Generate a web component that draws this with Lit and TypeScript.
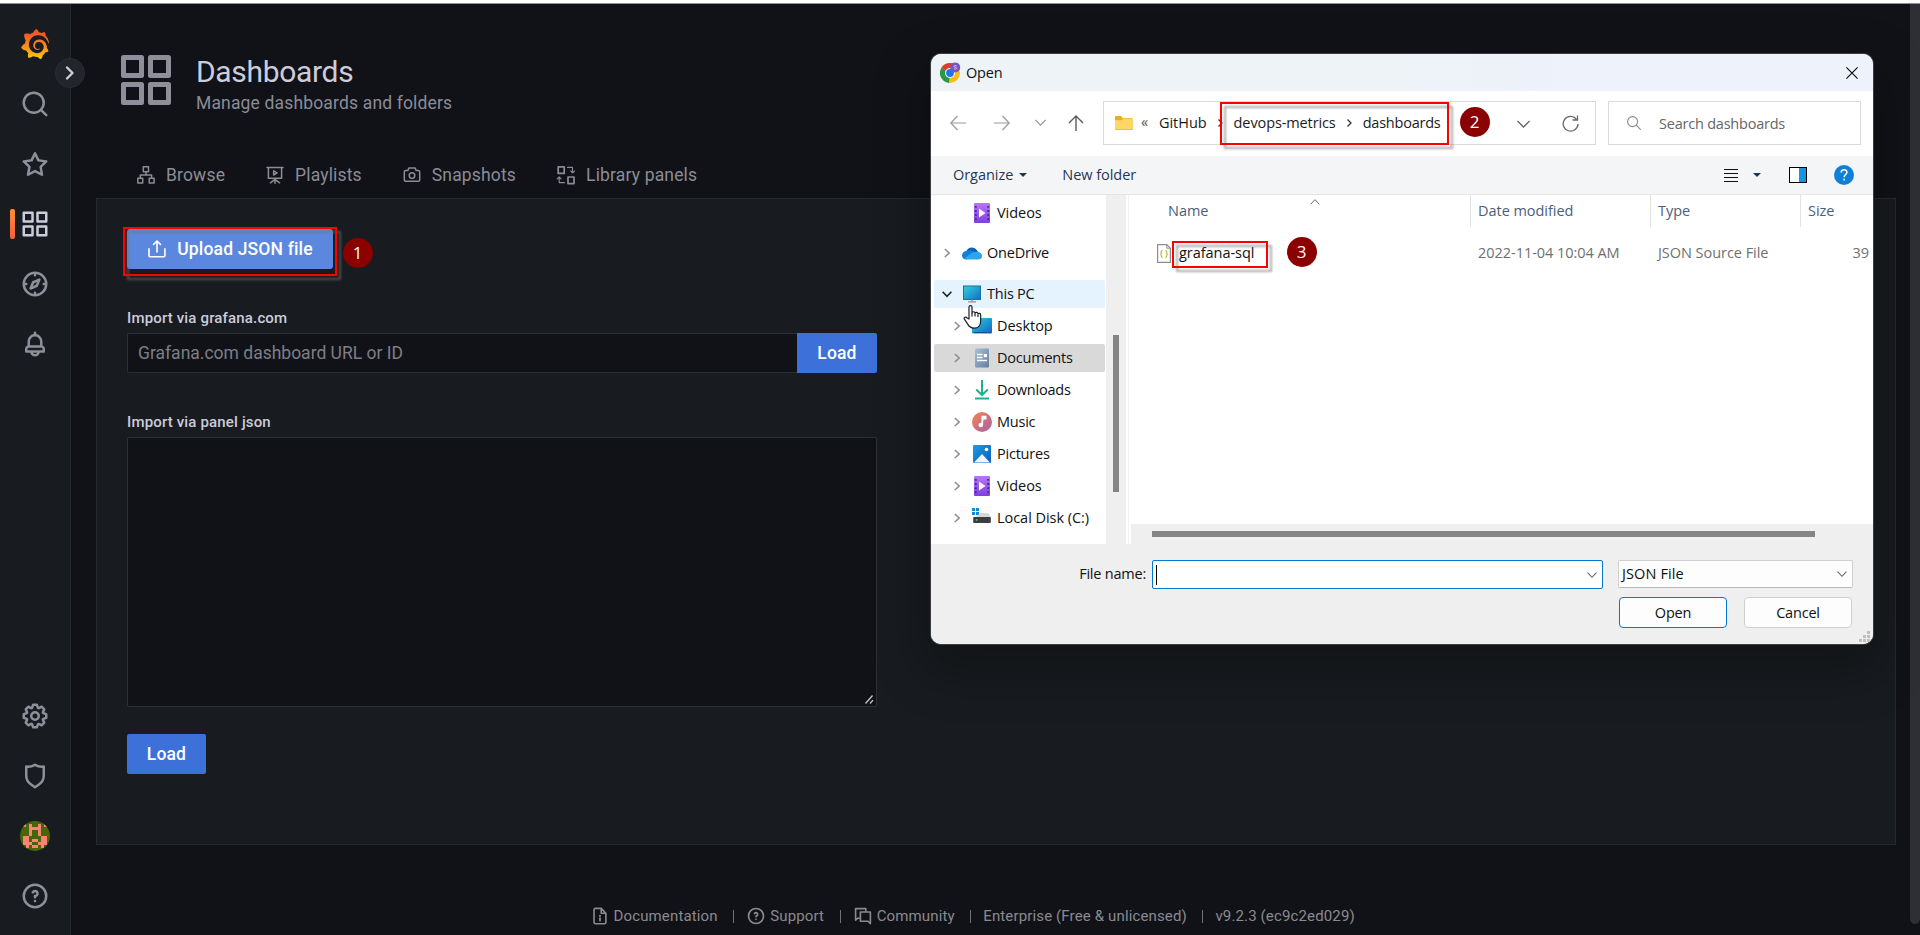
import { LitElement, html, svg, css } from "lit";
import { customElement } from "lit/decorators.js";

const PATHS = {
  search: "M21.71,20.29,18,16.61A9,9,0,1,0,16.61,18l3.68,3.68a1,1,0,0,0,1.42,0A1,1,0,0,0,21.71,20.29ZM11,18a7,7,0,1,1,7-7A7,7,0,0,1,11,18Z",
  star: "M22,9.67A1,1,0,0,0,21.14,9l-5.69-.83L12.9,3a1,1,0,0,0-1.8,0L8.55,8.16,2.86,9a1,1,0,0,0-.81.68,1,1,0,0,0,.25,1l4.13,4-1,5.68A1,1,0,0,0,6.9,21.44L12,18.77l5.1,2.67a.93.93,0,0,0,.46.12,1,1,0,0,0,.59-.19,1,1,0,0,0,.4-1l-1-5.68,4.13-4A1,1,0,0,0,22,9.67Zm-6.15,4a1,1,0,0,0-.29.88l.72,4.2-3.76-2a1.06,1.06,0,0,0-.94,0l-3.76,2,.72-4.2a1,1,0,0,0-.29-.88l-3-3,4.21-.61a1,1,0,0,0,.76-.55L12,5.7l1.88,3.82a1,1,0,0,0,.76.55l4.21.61Z",
  apps: "M10,13H3a1,1,0,0,0-1,1v7a1,1,0,0,0,1,1h7a1,1,0,0,0,1-1V14A1,1,0,0,0,10,13ZM9,20H4V15H9ZM21,2H14a1,1,0,0,0-1,1v7a1,1,0,0,0,1,1h7a1,1,0,0,0,1-1V3A1,1,0,0,0,21,2ZM20,9H15V4h5Zm1,4H14a1,1,0,0,0-1,1v7a1,1,0,0,0,1,1h7a1,1,0,0,0,1-1V14A1,1,0,0,0,21,13Zm-1,7H15V15h5ZM10,2H3A1,1,0,0,0,2,3v7a1,1,0,0,0,1,1h7a1,1,0,0,0,1-1V3A1,1,0,0,0,10,2ZM9,9H4V4H9Z",
  compass: "M12,2A10,10,0,1,0,22,12,10,10,0,0,0,12,2Zm1,17.93V19a1,1,0,0,0-2,0v.93A8,8,0,0,1,4.07,13H5a1,1,0,0,0,0-2H4.07A8,8,0,0,1,11,4.07V5a1,1,0,0,0,2,0V4.07A8,8,0,0,1,19.93,11H19a1,1,0,0,0,0,2h.93A8,8,0,0,1,13,19.93ZM15.14,7.55l-5,2.12a1,1,0,0,0-.52.52l-2.12,5a1,1,0,0,0,.21,1.1,1,1,0,0,0,.7.3.93.93,0,0,0,.4-.09l5-2.12a1,1,0,0,0,.52-.52l2.12-5a1,1,0,0,0-1.31-1.31Zm-2.49,5.1-2.28,1,1-2.28,2.28-1Z",
  bell: "M18,13.18V10a6,6,0,0,0-5-5.91V3a1,1,0,0,0-2,0V4.09A6,6,0,0,0,6,10v3.18A3,3,0,0,0,4,16v2a1,1,0,0,0,1,1H8.14a4,4,0,0,0,7.72,0H19a1,1,0,0,0,1-1V16A3,3,0,0,0,18,13.18ZM8,10a4,4,0,0,1,8,0v3H8Zm4,10a2,2,0,0,1-1.72-1h3.44A2,2,0,0,1,12,20Zm6-3H6V16a1,1,0,0,1,1-1H17a1,1,0,0,1,1,1Z",
  gear: "M21.32,9.55l-1.89-.63.89-1.78A1,1,0,0,0,20.13,6L18,3.87a1,1,0,0,0-1.15-.19l-1.78.89-.63-1.89A1,1,0,0,0,13.5,2h-3a1,1,0,0,0-.95.68L8.92,4.57,7.14,3.68A1,1,0,0,0,6,3.87L3.87,6a1,1,0,0,0-.19,1.15l.89,1.78-1.89.63A1,1,0,0,0,2,10.5v3a1,1,0,0,0,.68.95l1.89.63-.89,1.78A1,1,0,0,0,3.87,18L6,20.13a1,1,0,0,0,1.15.19l1.78-.89.63,1.89a1,1,0,0,0,.95.68h3a1,1,0,0,0,.95-.68l.63-1.89,1.78.89A1,1,0,0,0,18,20.13L20.13,18a1,1,0,0,0,.19-1.15l-.89-1.78,1.89-.63A1,1,0,0,0,22,13.5v-3A1,1,0,0,0,21.32,9.55ZM20,12.78l-1.2.4A2,2,0,0,0,17.64,16l.57,1.14-1.1,1.1L16,17.64a2,2,0,0,0-2.79,1.16l-.4,1.2H11.22l-.4-1.2A2,2,0,0,0,8,17.64l-1.14.57-1.1-1.1L6.36,16A2,2,0,0,0,5.2,13.18L4,12.78V11.22l1.2-.4A2,2,0,0,0,6.36,8L5.79,6.89l1.1-1.1L8,6.36A2,2,0,0,0,10.82,5.2l.4-1.2h1.56l.4,1.2A2,2,0,0,0,16,6.36l1.14-.57,1.1,1.1L17.64,8a2,2,0,0,0,1.16,2.79l1.2.4ZM12,8a4,4,0,1,0,4,4A4,4,0,0,0,12,8Zm0,6a2,2,0,1,1,2-2A2,2,0,0,1,12,14Z",
  shield: "M19.63,3.65a1,1,0,0,0-.84-.2,8,8,0,0,1-6.22-1.27,1,1,0,0,0-1.14,0A8,8,0,0,1,5.21,3.45a1,1,0,0,0-.84.2A1,1,0,0,0,4,4.43v7.45a9,9,0,0,0,3.77,7.33l3.65,2.6a1,1,0,0,0,1.16,0l3.65-2.6A9,9,0,0,0,20,11.88V4.43A1,1,0,0,0,19.63,3.65ZM18,11.88a7,7,0,0,1-2.93,5.7L12,19.77,8.93,17.58A7,7,0,0,1,6,11.88V5.58a10,10,0,0,0,6-1.39,10,10,0,0,0,6,1.39Z",
  help: "M11.29,15.29a1.58,1.58,0,0,0-.12.15.76.76,0,0,0-.09.18.64.64,0,0,0-.06.18,1.36,1.36,0,0,0,0,.2.84.84,0,0,0,.08.38.9.9,0,0,0,.54.54.94.94,0,0,0,.76,0,.9.9,0,0,0,.54-.54A1,1,0,0,0,13,16a1,1,0,0,0-.29-.71A1,1,0,0,0,11.29,15.29ZM12,2A10,10,0,1,0,22,12,10,10,0,0,0,12,2Zm0,18a8,8,0,1,1,8-8A8,8,0,0,1,12,20ZM12,7A3,3,0,0,0,9.4,8.5a1,1,0,1,0,1.73,1A1,1,0,0,1,12,9a1,1,0,0,1,0,2,1,1,0,0,0-1,1v1a1,1,0,0,0,2,0v-.18A3,3,0,0,0,12,7Z",
  grafana: "M23.02 10.59a8.578 8.578 0 0 0-.862-3.034 8.911 8.911 0 0 0-1.789-2.445c.337-1.342-.413-2.505-.413-2.505-1.292-.08-2.113.4-2.416.62-.052-.02-.102-.044-.154-.064-.22-.089-.446-.172-.677-.247-.231-.073-.47-.14-.711-.197a9.867 9.867 0 0 0-.875-.161C14.557.753 12.94 0 12.94 0c-1.804 1.145-2.147 2.744-2.147 2.744l-.018.093c-.098.029-.2.057-.298.088-.138.042-.275.094-.413.143-.138.055-.275.107-.41.166a8.869 8.869 0 0 0-1.557.87l-.063-.029c-2.497-.955-4.716.195-4.716.195-.203 2.658.996 4.33 1.235 4.636a11.608 11.608 0 0 0-.607 2.635C1.636 12.677.953 15.014.953 15.014c1.926 2.214 4.171 2.351 4.171 2.351.003-.002.006-.002.006-.005.285.509.615.994.986 1.446.156.19.32.371.488.548-.704 2.009.099 3.68.099 3.68 2.144.08 3.553-.937 3.849-1.173a9.784 9.784 0 0 0 3.164.501h.08l.055-.003.107-.002.103-.005.003.002c1.01 1.44 2.788 1.646 2.788 1.646 1.264-1.332 1.337-2.653 1.337-2.94v-.058c0-.02-.003-.039-.003-.06.265-.187.52-.387.758-.6a7.875 7.875 0 0 0 1.415-1.7c1.43.083 2.437-.885 2.437-.885-.236-1.49-1.085-2.216-1.264-2.354l-.018-.013-.016-.013a.217.217 0 0 1-.031-.02c.008-.092.016-.18.02-.27.011-.162.016-.323.016-.48v-.253l-.005-.098-.008-.135a1.891 1.891 0 0 0-.01-.13c-.003-.042-.008-.083-.013-.125l-.016-.124-.018-.122a6.215 6.215 0 0 0-2.032-3.73 6.015 6.015 0 0 0-3.222-1.46 6.292 6.292 0 0 0-.85-.048l-.107.002h-.063l-.044.003-.104.008a4.777 4.777 0 0 0-3.335 1.695c-.332.4-.592.84-.768 1.297a4.594 4.594 0 0 0-.312 1.817l.003.091c.005.055.007.11.013.164a3.615 3.615 0 0 0 .698 1.82 3.53 3.53 0 0 0 1.827 1.282c.33.098.66.14.971.137.039 0 .078 0 .114-.002l.063-.003c.02 0 .041-.003.062-.003.034-.002.065-.007.099-.01.007 0 .018-.003.028-.003l.031-.005.06-.008a1.18 1.18 0 0 0 .112-.02c.036-.008.072-.013.109-.024a2.634 2.634 0 0 0 .914-.415c.028-.02.056-.041.085-.065a.248.248 0 0 0 .039-.35.244.244 0 0 0-.309-.06l-.078.042c-.09.044-.184.083-.283.116a2.476 2.476 0 0 1-.475.096c-.028.003-.054.006-.083.006l-.083.002c-.026 0-.054 0-.08-.002l-.102-.006h-.012l-.024.006c-.016-.003-.031-.003-.044-.006-.031-.002-.06-.007-.091-.01a2.59 2.59 0 0 1-.724-.213 2.557 2.557 0 0 1-.667-.438 2.52 2.52 0 0 1-.805-1.475 2.306 2.306 0 0 1-.029-.444l.006-.122v-.023l.002-.031c.003-.021.003-.04.005-.06a3.163 3.163 0 0 1 1.352-2.29 3.12 3.12 0 0 1 .937-.43 2.946 2.946 0 0 1 .776-.101h.06l.07.002.045.003h.026l.07.005a4.041 4.041 0 0 1 1.635.49 3.94 3.94 0 0 1 1.602 1.662 3.77 3.77 0 0 1 .397 1.414l.005.076.003.075c.002.026.002.05.002.075 0 .024.003.052 0 .07v.065l-.002.073-.008.174a6.195 6.195 0 0 1-.08.639 5.1 5.1 0 0 1-.267.927 5.31 5.31 0 0 1-.624 1.13 5.052 5.052 0 0 1-3.237 2.014 4.82 4.82 0 0 1-.649.066l-.039.003h-.287a6.607 6.607 0 0 1-1.716-.265 6.776 6.776 0 0 1-3.4-2.274 6.75 6.75 0 0 1-.746-1.15 6.616 6.616 0 0 1-.714-2.596l-.005-.083-.002-.02v-.056l-.003-.073v-.096l-.003-.104v-.07l.003-.163c.008-.22.026-.45.054-.678a8.707 8.707 0 0 1 .28-1.355c.128-.444.286-.872.473-1.277a7.04 7.04 0 0 1 1.456-2.1 5.925 5.925 0 0 1 .953-.763c.169-.111.343-.213.524-.306.089-.05.182-.091.273-.135.047-.02.093-.042.138-.062a7.177 7.177 0 0 1 .714-.267l.145-.045c.049-.015.098-.026.148-.041.098-.029.197-.052.296-.076.049-.013.1-.02.15-.033l.15-.032.151-.028.076-.013.075-.01.153-.024c.057-.01.114-.013.171-.023l.169-.021c.036-.003.073-.008.106-.01l.073-.008.036-.003.042-.002c.057-.003.114-.008.171-.01l.086-.006h.023l.037-.003.145-.007a7.999 7.999 0 0 1 1.708.125 7.917 7.917 0 0 1 2.048.68 8.253 8.253 0 0 1 1.672 1.09l.09.077.089.078c.06.052.114.107.171.159.057.052.112.106.166.16.052.055.107.107.159.164a8.671 8.671 0 0 1 1.41 1.978c.012.026.028.052.04.078l.04.078.075.156c.023.051.05.1.07.153l.065.15a8.848 8.848 0 0 1 .45 1.34.19.19 0 0 0 .201.142.186.186 0 0 0 .172-.184c.01-.246.002-.532-.024-.856z",
};
type Glyph = keyof typeof PATHS;
const glyph = (n: Glyph, s = 30) => html`<svg width=${s} height=${s} viewBox="0 0 24 24" fill="currentColor"><path d=${PATHS[n]}></path></svg>`;
const line = (w: number, h: number, body: unknown, sw = 1.6) =>
  html`<svg width=${w} height=${h} viewBox="0 0 ${w} ${h}" fill="none" stroke="currentColor" stroke-width=${sw} stroke-linejoin="round" stroke-linecap="round">${body}</svg>`;

/* ---------- line icons of the main page ---------- */
const siteIcon = line(20, 20, svg`<path d="M7.3 1.8h5.2v4.9H7.3zM1.8 13.2h4.9v4.9H1.8zM13.2 13.2h4.9v4.9h-4.9zM10 6.7v3.2M4.3 13.2V9.9h11.3v3.3"/>`, 1.5);
const playIcon = line(20, 20, svg`<path d="M2 2.5h16M3.4 2.5v10.7h13.2V2.5M10 13.2v5M10 14.4l-4.6 3.4M10 14.4l4.6 3.4M8.6 5.8v4.2l3.5-2.1z"/>`, 1.5);
const cameraIcon = line(20, 20, svg`<path d="M3.6 5.6h2.2l1-2.5h6.4l1 2.5h2.2c.9 0 1.3.5 1.3 1.3v8c0 .9-.5 1.3-1.3 1.3H3.6c-.9 0-1.3-.5-1.3-1.3v-8c0-.9.5-1.3 1.3-1.3z"/><circle cx="10" cy="10.6" r="2.8"/>`, 1.5);
const libIcon = line(20, 20, svg`<path d="M2.2 1.8h6v6.6h-6zM12 12h6v6.6h-6z" stroke-width="1.7"/><path d="M11.5 2.4h5v5M14.7 6l1.9 1.9L18.6 6M8.5 17.6H3.2v-5M1.2 13.9l2-1.9 1.9 1.9" stroke-width="1.1"/>`);
const uploadIcon = line(20, 20, svg`<path d="M2 9.8v6.6c0 .9.5 1.4 1.3 1.4h13.2c.9 0 1.4-.5 1.4-1.4V9.8M10 13V2.2M6.6 5.4L10 2l3.4 3.4"/>`);
const fileIcon = line(20, 20, svg`<path d="M11.2 2.4H5.6c-1 0-1.6.6-1.6 1.5v12.3c0 .9.6 1.5 1.6 1.5h8.8c.9 0 1.5-.6 1.5-1.5V7.2zM11.2 2.4v4.8h4.7"/><path d="M10 9.8v.2M10 12.2v2.4" stroke-width="1.9"/>`);
const chatIcon = line(20, 20, svg`<path d="M12.8 5.2V2.6H2.6v11.6l2.2-2h1.6"/><path d="M7.4 6h10v11.6l-2.4-2.4H7.4z"/>`);

/* ---------- file dialog icons ---------- */
const chev = (d: "r" | "d" | "u", s: number, c: string, sw = 1.3) => html`<svg width=${s * 2} height=${s * 2} viewBox="${-s} ${-s} ${s * 2} ${s * 2}" fill="none" stroke=${c} stroke-width=${sw}><path d=${{ r: `M${-s / 2 + 0.3} ${-s + 1}L${s / 2 - 0.3} 0L${-s / 2 + 0.3} ${s - 1}`, d: `M${-s + 0.6} ${-s / 2 + 0.2}L0 ${s / 2 - 0.2}L${s - 0.6} ${-s / 2 + 0.2}`, u: `M${-s + 0.6} ${s / 2 - 0.2}L0 ${-s / 2 + 0.2}L${s - 0.6} ${s / 2 - 0.2}` }[d]}></path></svg>`;
const chrome = html`<svg width="21" height="21" viewBox="0 0 21 21"><circle cx="10" cy="11" r="10" fill="#fbbc1a"/><path d="M10 11L1.3 6A10 10 0 0 1 18.7 6z" fill="#df3b2f"/><path d="M10 11L1.3 6A10 10 0 0 0 9.6 21z" fill="#27984a"/><path d="M10 11l4.6 2.6L10 21l-1-.1z" fill="#fbbc1a"/><circle cx="10" cy="11" r="5" fill="#fff"/><circle cx="10" cy="11" r="3.9" fill="#1f74e6"/><circle cx="15.2" cy="5.4" r="5" fill="#7a55c0"/><path d="M16.6 4c-.6-.7-2.7-.6-2.6.4 0 1.1 2.6.6 2.6 1.8 0 1-2 1.1-2.7.4" fill="none" stroke="#d9ccf0" stroke-width=".9"/></svg>`;
const video = html`<svg width="20" height="20" viewBox="0 0 20 20"><defs><linearGradient id="vg" x2="0" y2="1"><stop stop-color="#b677f5"/><stop offset="1" stop-color="#7f3ee0"/></linearGradient></defs><rect x="2" width="16" height="20" rx="1" fill="url(#vg)"/><path d="M3.8 3v14.5M16.2 3v14.5" stroke="#4a2391" stroke-width="1.8" stroke-dasharray="1.8 2.3"/><path d="M7 5.5v9l6.5-4.5z" fill="#fff"/></svg>`;
const cloud = html`<svg width="20" height="20" viewBox="0 0 20 20"><path d="M4.5 8A6 6 0 0 1 15 7.2L18 12H6z" fill="#0b62b8"/><path d="M4.8 7.8C2 8 0 10 0 12.5 0 15 2 16.6 4.5 16.6L14 9.5C11 7.5 8 7 4.8 7.8z" fill="#1180d8"/><path d="M2.5 16C6 12 10 9 14.5 8.7 18 8.7 20 10.5 20 13c0 2.2-1.7 3.6-3.6 3.6H4.5z" fill="#2aa6ee"/></svg>`;
const pc = html`<svg width="20" height="20" viewBox="0 0 20 20"><defs><linearGradient id="pg" x2="1" y2="1"><stop stop-color="#35d0dd"/><stop offset="1" stop-color="#0f6fc5"/></linearGradient></defs><rect x="1.5" y="2" width="17" height="13.5" fill="url(#pg)" stroke="#1b6f9c"/><path d="M10 15.5v2M6 17.8h8" stroke="#8a9499" stroke-width="1.3"/></svg>`;
const desktop = html`<svg width="20" height="20" viewBox="0 0 20 20"><rect y="2" width="20" height="15.5" rx="1" fill="url(#dg)"/><defs><linearGradient id="dg" x2="1" y2="1"><stop stop-color="#2fd0dc"/><stop offset="1" stop-color="#0c66c4"/></linearGradient></defs><path d="M2 16.5h13M16 16.5h1M18 16.5h1" stroke="#0c4e8e"/></svg>`;
const docs = html`<svg width="20" height="20" viewBox="0 0 20 20"><defs><linearGradient id="og" x2="1" y2="1"><stop stop-color="#a9c0d8"/><stop offset="1" stop-color="#607f9e"/></linearGradient></defs><rect x="3" y=".5" width="14" height="19" rx="1" fill="url(#og)"/><path d="M5 6.5h5.5M5 9.5h5.5M5 12.5h10" stroke="#fff" stroke-width="1.3"/><rect x="11.8" y="6" width="3.2" height="3.2" fill="#fff"/></svg>`;
const downloads = html`<svg width="20" height="20" viewBox="0 0 20 20" fill="none" stroke="#1fb08d" stroke-width="2"><path d="M10 0v14.5M4.2 9.5L10 15l5.8-5.5M3 18.5h14"/></svg>`;
const music = html`<svg width="20" height="20" viewBox="0 0 20 20"><defs><linearGradient id="mg" x2="1" y2="1"><stop offset=".1" stop-color="#ee8256"/><stop offset="1" stop-color="#a45fae"/></linearGradient></defs><circle cx="10" cy="10" r="10" fill="url(#mg)"/><circle cx="8.8" cy="13" r="2.3" fill="#fff"/><path d="M10.3 13V4.5h3.4v2.2h-2" stroke="#fff" stroke-width="1.6" fill="#fff"/></svg>`;
const pictures = html`<svg width="20" height="20" viewBox="0 0 20 20"><defs><linearGradient id="ig" x2="1" y2="1"><stop stop-color="#1e9be6"/><stop offset="1" stop-color="#0b5fb8"/></linearGradient></defs><rect x="1" y="1" width="18" height="18" rx="1" fill="url(#ig)"/><path d="M2 18.5l8-8.5 8 8.5z" fill="#eef7fe"/><circle cx="14.5" cy="5.5" r="1.8" fill="#fff"/></svg>`;
const disk = html`<svg width="20" height="20" viewBox="0 0 20 20"><path d="M0 0h3v3H0zM4 0h3v3H4zM0 4h3v3H0zM4 4h3v3H4z" fill="#1488d8"/><path d="M8 5h8l3 4H4z" fill="#d5d8db"/><rect x="1.2" y="9" width="17.6" height="6" rx=".8" fill="#3b3d40"/><circle cx="4.6" cy="11.8" r=".9" fill="#4be36c"/></svg>`;
const folder = html`<svg width="18" height="16" viewBox="0 0 18 16"><path d="M0 2a1 1 0 0 1 1-1h5l2 2.2h9a1 1 0 0 1 1 1V13H0z" fill="#efab1c"/><path d="M0 5.2h6.5L8 4h10v10.3a.7.7 0 0 1-.7.7H.7a.7.7 0 0 1-.7-.7z" fill="#ffd766"/><path d="M0 14.5h18" stroke="#eab543" stroke-width=".8"/></svg>`;
const jsonFile = html`<svg width="14" height="19" viewBox="0 0 14 19"><path d="M.6.6h9.2l3.6 3.6v14.2H.6z" fill="#fff" stroke="#8d8d8d" stroke-width="1.2"/><path d="M9.8.6v3.6h3.6" fill="none" stroke="#8d8d8d"/><path d="M5.6 6.5c-1.300 0-1.300.5-1.300 1.700 0 1 0 1.600-.9 1.800.9.200.9.800.9 1.800 0 1.200 0 1.700 1.300 1.700M8.400 6.500c1.300 0 1.300.5 1.300 1.700 0 1 0 1.600.9 1.800-.9.200-.9.800-.9 1.800 0 1.200 0 1.700-1.300 1.700" fill="none" stroke="#b9b92e" stroke-width="1.2"/></svg>`;

const AVATAR: [number, number][] = [
  [1, 1], [3, 1], [6, 1], [8, 1], [3, 2], [4, 2], [5, 2], [6, 2], [3, 3], [6, 3], [3, 4], [6, 4],
  [1, 5], [2, 5], [7, 5], [8, 5], [1, 6], [2, 6], [4, 6], [5, 6], [7, 6], [8, 6],
  [1, 7], [2, 7], [3, 7], [6, 7], [7, 7], [8, 7], [2, 8], [4, 8], [5, 8], [7, 8],
];

@customElement("side-nav")
export class SideNav extends LitElement {
  static styles = css`
    :host { display: flex; flex-direction: column; position: relative; width: 70px; background: #181b1f; border-right: 1px solid #25282d; color: #8e8f9b; }
    .item { height: 60px; display: flex; align-items: center; justify-content: center; flex: none; }
    .logo { height: 56px; flex: none; padding: 12px 0 2px; display: flex; align-items: center; justify-content: center; }
    .active { color: #ccccdc; position: relative; }
    .active::before { content: ""; position: absolute; left: 10px; top: 15px; width: 5px; height: 30px; border-radius: 2px; background: linear-gradient(#ff8f33, #f55f3e); }
    .space { flex: 1; }
    .toggle { position: absolute; left: 55px; top: 54px; width: 28px; height: 28px; border: 1px solid #2a2d33; border-radius: 50%; background: #22252b; display: flex; align-items: center; justify-content: center; color: #ccccdc; z-index: 1; }
    .bottom { padding-bottom: 9px; }
    svg { display: block; }
  `;
  render() {
    return html`
      <div class="logo"><svg width="30" height="30" viewBox="0 0 24 24"><defs><linearGradient id="gl" x2="0" y2="1"><stop offset=".2" stop-color="#f05a28"/><stop offset="1" stop-color="#fbca0a"/></linearGradient></defs><path fill="url(#gl)" d=${PATHS.grafana}></path></svg></div>
      <div class="toggle"><svg width="28" height="28" viewBox="0 0 28 28" fill="none" stroke="currentColor" stroke-width="2.4" stroke-linecap="round" stroke-linejoin="round"><path d="M11 8.5l5.500 5.500-5.500 5.500"/></svg></div>
      <div class="item">${glyph("search")}</div>
      <div class="item">${glyph("star")}</div>
      <div class="item active">${glyph("apps")}</div>
      <div class="item">${glyph("compass")}</div>
      <div class="item">${glyph("bell")}</div>
      <div class="space"></div>
      <div class="item">${glyph("gear")}</div>
      <div class="item">${glyph("shield")}</div>
      <div class="item"><svg width="30" height="30" viewBox="0 0 10 10" shape-rendering="crispEdges"><defs><clipPath id="av"><circle cx="5" cy="5" r="5"/></clipPath></defs><g clip-path="url(#av)"><rect width="10" height="10" fill="#48650a"/>${AVATAR.map(([x, y]) => svg`<rect x=${x} y=${y} width="1" height="1" fill="#fc8274"/>`)}</g></svg></div>
      <div class="item">${glyph("help")}</div>
      <div class="bottom"></div>`;
  }
}

@customElement("dashboards-page")
export class DashboardsPage extends LitElement {
  static styles = css`
    :host { display: flex; flex-direction: column; padding: 0 14px 0 25px; color: #ccccdc; font: 17.5px/24px Roboto, sans-serif; letter-spacing: 0.16px; }
    svg { display: block; }
    header { height: 194px; display: flex; flex-direction: column; justify-content: space-between; box-sizing: border-box; padding: 46px 0 11px 20px; color: #8b8c97; }
    .title { display: flex; gap: 20px; }
    .title > div { padding-top: 4px; }
    h1 { margin: 0; font-size: 30px; font-weight: 400; line-height: 36px; letter-spacing: -0.32px; color: #ccccdc; }
    .sub { line-height: 26px; }
    .tabs { display: flex; gap: 40px; padding-left: 20px; }
    .tab { display: flex; gap: 10px; align-items: center; }
    .panel { height: 647px; box-sizing: border-box; background: #181b1f; border: 1px solid #26292e; padding: 30px; display: flex; flex-direction: column; align-items: flex-start; }
    .btn { height: 40px; background: #3d71d9; color: #fff; font-weight: 500; border-radius: 2px; display: flex; align-items: center; justify-content: center; }
    .up { width: 206px; background: #5b88de; gap: 10px; border-radius: 3px; }
    .label { font-size: 15px; font-weight: 500; line-height: 20px; margin: 39px 0 5px; }
    .row { display: flex; }
    .input { width: 670px; height: 40px; box-sizing: border-box; border: 1px solid #2d2f34; border-right: 0; border-radius: 2px 0 0 2px; background: #111217; padding: 7px 10px; color: #7d7e88; letter-spacing: 0; }
    .input + .btn { width: 80px; border-radius: 0 2px 2px 0; }
    .area { width: 750px; height: 270px; box-sizing: border-box; border: 1px solid #2d2f34; border-radius: 2px; background: #111217; display: flex; justify-content: flex-end; align-items: flex-end; }
    .load { width: 79px; margin-top: 27px; }
    footer { display: flex; align-items: center; padding: 61px 0 0 493.500px; font-size: 15px; line-height: 20px; color: #8a8a90; letter-spacing: 0.14px; }
    .f { display: flex; gap: 4px; align-items: center; }
    .sep { width: 1px; height: 13px; background: #75706c; margin: 1px 12px 0 15.500px; }
  `;
  render() {
    return html`
      <header>
        <div class="title">
          <svg width="60" height="60" viewBox="0 0 60 60" fill="none" stroke="#8e8f9b" stroke-width="5"><path d="M7.500 7.500h18v18h-18zM34.500 7.500h18v18h-18zM7.500 34.500h18v18h-18zM34.500 34.500h18v18h-18z" stroke-linejoin="round"/></svg>
          <div><h1>Dashboards</h1><div class="sub">Manage dashboards and folders</div></div>
        </div>
        <nav class="tabs">
          <div class="tab">${siteIcon}<span>Browse</span></div>
          <div class="tab">${playIcon}<span>Playlists</span></div>
          <div class="tab">${cameraIcon}<span>Snapshots</span></div>
          <div class="tab">${libIcon}<span>Library panels</span></div>
        </nav>
      </header>
      <section class="panel">
        <div class="btn up">${uploadIcon}<span>Upload JSON file</span></div>
        <div class="label">Import via grafana.com</div>
        <div class="row"><div class="input">Grafana.com dashboard URL or ID</div><div class="btn">Load</div></div>
        <div class="label">Import via panel json</div>
        <div class="area"><svg width="12" height="12" viewBox="0 0 12 12" stroke="#c8c8cc" stroke-width="1.300"><path d="M1.500 9.500l7-8M6 9.500l3-3.400"/></svg></div>
        <div class="btn load">Load</div>
      </section>
      <footer>
        <div class="f">${fileIcon}Documentation</div><i class="sep"></i>
        <div class="f">${glyph("help", 20)}Support</div><i class="sep"></i>
        <div class="f">${chatIcon}Community</div><i class="sep"></i>
        <div class="f">Enterprise (Free &amp; unlicensed)</div><i class="sep"></i>
        <div class="f">v9.2.3 (ec9c2ed029)</div>
      </footer>`;
  }
}

@customElement("open-dialog")
export class OpenDialog extends LitElement {
  static styles = css`
    :host { display: flex; flex-direction: column; width: 942px; height: 590px; border-radius: 10px; overflow: hidden; background: #fff; color: #111; font: 14.500px/20px "Open Sans", "Noto Sans", sans-serif; letter-spacing: -0.04px; box-shadow: 0 0 0 1px #3c3d41, 0 20px 50px 8px rgba(0, 0, 0, 0.26); }
    svg { display: block; flex: none; }
    .k { letter-spacing: -0.220px; }
    .bar { height: 37px; flex: none; background: linear-gradient(90deg, #edf3f7 50%, #edf2fb 68%); display: flex; align-items: center; padding: 0 15px 0 9px; gap: 5px; }
    .grow { flex: 1; }
    .nav { height: 65px; box-sizing: border-box; flex: none; display: flex; align-items: center; padding: 0 12px 1px 19px; color: #1b1b1b; }
    .arrows { display: flex; align-items: center; width: 153px; }
    .arrows :nth-child(2) { margin: 0 25px 0 28px; }
    .arrows :nth-child(4) { margin-left: 22px; }
    .addr { width: 493px; height: 44px; box-sizing: border-box; border: 1px solid #d9d9d9; display: flex; align-items: center; padding: 0 16px 0 11px; }
    .addr .q { margin: 0 9px 3px 8px; width: 9px; color: #555; letter-spacing: 0; }
    .addr .m { letter-spacing: -0.110px; }
    .find { width: 253px; height: 44px; margin-left: 12px; box-sizing: border-box; border: 1px solid #d9d9d9; display: flex; align-items: center; padding-left: 18px; gap: 18px; color: #666; }
    .find .k { padding-top: 1px; }
    .tools { height: 38px; flex: none; background: #f4f5f7; border-bottom: 1px solid #e3e4e6; display: flex; align-items: center; color: #1f3657; padding: 0 19px 0 22px; }
    .tri { border: 4.500px solid transparent; border-top-color: #1f3657; border-bottom: 0; margin: 0 35px 0 6px; }
    .tri.s { border-width: 4px 4px 0; margin: 0 28px 0 15px; }
    .body { display: flex; height: 349px; flex: none; }
    .tree { width: 171px; padding: 0 1px 0 3px; flex: none; height: 349px; overflow: hidden; }
    .node { height: 28px; margin: 0 0 4px; border-radius: 2px; display: flex; align-items: center; padding-left: 18px; }
    .node .c { width: 20px; flex: none; }
    .node .l { padding-left: 5px; }
    .node.top { padding-left: 8px; }
    .node.top .c { width: 20px; }
    .first { margin: 4px 0 12px; }
    .od { margin-bottom: 13px; }
    .hov { background: #e5f3ff; }
    .sel { background: #d9d9d9; }
    .vs { width: 20px; background: #efefef; padding: 140px 7px 0; box-sizing: border-box; flex: none; }
    .vs i { display: block; width: 6px; height: 157px; background: #858585; }
    .gap { width: 5px; flex: none; background: linear-gradient(90deg, #fff 2px, #f1f1f1 2px 3px, #fff 3px); }
    .files { flex: 1; display: flex; flex-direction: column; min-width: 0; }
    .cols, .file { display: grid; grid-template-columns: 339px 180px 150px 73px; }
    .cols { height: 32px; align-items: center; color: #4c607a; }
    .cols div { height: 32px; box-sizing: border-box; border-left: 1px solid #e2e2e2; padding: 6px 0 0 7px; }
    .cols div:first-child { border: 0; padding-left: 37px; display: flex; }
    .cols svg { margin: -4px 0 0 102px; }
    .file { color: #6f6f6f; margin-top: 16px; height: 20px; align-items: center; }
    .file div { padding-left: 8px; }
    .file .n { display: flex; align-items: center; padding-left: 26px; gap: 8px; color: #111; }
    .file .r { text-align: right; padding-right: 4px; }
    .hs { margin-top: auto; height: 20px; background: #efefef; padding: 7px 0 0 21px; box-sizing: border-box; }
    .hs i { display: block; width: 663px; height: 6px; background: #858585; }
    .foot { flex: 1; background: #efefef; display: grid; grid-template-columns: 221px 451px 250px; grid-template-rows: 29px 31px; row-gap: 8px; padding-top: 16px; position: relative; }
    .fn { text-align: right; padding: 4px 6px 0 0; }
    .combo { box-sizing: border-box; height: 29px; border: 1px solid #0078d4; border-radius: 2px; background: #fff; display: flex; align-items: center; padding: 0 5px 0 3px; justify-content: space-between; }
    .caret { width: 1px; height: 20px; background: #000; }
    .type { margin-left: 15px; height: 28px; box-sizing: border-box; border: 1px solid #d0d0d0; border-bottom-color: #b9b9b9; border-radius: 2px; background: #fdfdfd; display: flex; align-items: center; justify-content: space-between; padding: 0 5px 0 3px; letter-spacing: 0.12px; }
    .acts { grid-column: 3; display: flex; gap: 17px; padding-left: 16px; }
    .act { width: 108px; flex: none; height: 31px; box-sizing: border-box; border: 1px solid #d0d0d0; border-radius: 4px; background: #fdfdfd; display: flex; align-items: center; justify-content: center; letter-spacing: -0.2px; }
    .act.p { border-color: #0078d4; }
    .grip { position: absolute; right: 3px; bottom: 2px; }
  `;
  render() {
    const kids: [unknown, string, string, string][] = [
      [desktop, "Desktop", "", ""], [docs, "Documents", "sel", "k"], [downloads, "Downloads", "", "k"], [music, "Music", "", "k"],
      [pictures, "Pictures", "", "k"], [video, "Videos", "", ""], [disk, "Local Disk (C:)", "", ""],
    ];
    return html`
      <div class="bar">${chrome}<span class="k">Open</span><span class="grow"></span><svg width="12" height="12" viewBox="0 0 12 12" stroke="#111" stroke-width="1.200"><path d="M.4.4l11.200 11.200M11.600.4L.4 11.600"/></svg></div>
      <div class="nav">
        <div class="arrows">
          <svg width="16" height="16" viewBox="0 0 16 16" fill="none" stroke="#9a9a9a" stroke-width="1.200"><path d="M16 8H1M7.500 1L.8 8l6.700 7"/></svg>
          <svg width="16" height="16" viewBox="0 0 16 16" fill="none" stroke="#9a9a9a" stroke-width="1.200"><path d="M0 8h15M8.500 1l6.700 7-6.700 7"/></svg>
          <svg width="11" height="16" viewBox="0 0 11 16" fill="none" stroke="#9a9a9a" stroke-width="1.300"><path d="M.3 5l5.200 5.200L10.700 5"/></svg>
          <svg width="16" height="16" viewBox="0 0 16 16" fill="none" stroke="#5a5a5a" stroke-width="1.400"><path d="M8 16V1M1 8l7-7 7 7"/></svg>
        </div>
        <div class="addr">${folder}<span class="q">«</span><span>GitHub</span><svg width="27" height="12" viewBox="0 0 27 12" fill="none" stroke="#333" stroke-width="1.300"><path d="M11.500 2.500L15 6l-3.500 3.500"/></svg><span class="m">devops-metrics</span><svg width="27" height="12" viewBox="0 0 27 12" fill="none" stroke="#333" stroke-width="1.300"><path d="M11.500 2.500L15 6l-3.500 3.500"/></svg><span class="k">dashboards</span><span class="grow"></span>
          <svg width="13" height="12" viewBox="0 0 13 12" fill="none" stroke="#666" stroke-width="1.300"><path d="M.5 4l6 6 6-6"/></svg>
          <svg width="49" height="18" viewBox="0 0 49 18" fill="none" stroke="#666" stroke-width="1.300"><path d="M46.300 5A7.400 7.400 0 1 0 48 10M47.500 1.500V6h-5"/></svg>
        </div>
        <div class="find"><svg width="14" height="14" viewBox="0 0 14 14" fill="none" stroke="#8a8a8a" stroke-width="1.100"><circle cx="5.600" cy="5.600" r="5"/><path d="M9.200 9.200l4.600 4.600"/></svg><span class="k">Search dashboards</span></div>
      </div>
      <div class="tools"><span>Organize</span><i class="tri"></i><span>New folder</span><span class="grow"></span>
        <svg width="14" height="14" viewBox="0 0 14 14" stroke="#111" stroke-width="1"><path d="M0 1.500h14M0 5.500h14M0 9.500h14M0 13.500h14"/></svg><i class="tri s"></i>
        <svg width="18" height="16" viewBox="0 0 18 16"><rect x=".5" y=".5" width="17" height="15" fill="#fff" stroke="#000"/><rect x="10" y="1" width="7" height="14" fill="#1495e0"/></svg>
        <svg width="47" height="20" viewBox="0 0 47 20"><circle cx="37" cy="10" r="10" fill="#0f80d6"/><path d="M34.200 7.500c0-3.600 5.700-3.600 5.700-.2 0 2.200-2.800 2.300-2.800 5M37.100 13.800v1.700" fill="none" stroke="#fff" stroke-width="1.500"/></svg>
      </div>
      <div class="body">
        <div class="tree">
          <div class="node first"><span class="c"></span>${video}<span class="l">Videos</span></div>
          <div class="node top od"><span class="c">${chev("r", 5, "#8a8a8a", 1.5)}</span>${cloud}<span class="l k">OneDrive</span></div>
          <div class="node top hov"><span class="c">${chev("d", 5, "#222", 1.6)}</span>${pc}<span class="l k">This PC</span></div>
          ${kids.map(([ic, name, row, text]) => html`<div class="node ${row}"><span class="c">${chev("r", 5, "#8a8a8a", 1.5)}</span>${ic}<span class="l ${text}">${name}</span></div>`)}
        </div>
        <div class="vs"><i></i></div>
        <div class="gap"></div>
        <div class="files">
          <div class="cols"><div>Name${chev("u", 5, "#666", 1)}</div><div>Date modified</div><div>Type</div><div>Size</div></div>
          <div class="file"><div class="n">${jsonFile}<span>grafana-sql</span></div><div>2022-11-04 10:04 AM</div><div>JSON Source File</div><div class="r">39</div></div>
          <div class="hs"><i></i></div>
        </div>
      </div>
      <div class="foot">
        <div class="fn k">File name:</div>
        <div class="combo"><i class="caret"></i>${chev("d", 5, "#666", 1.1)}</div>
        <div class="type">JSON File${chev("d", 5, "#666", 1.1)}</div>
        <div class="acts"><div class="act p">Open</div><div class="act">Cancel</div></div>
        <svg class="grip" width="11" height="11" viewBox="0 0 11 11" fill="#c0c0c0"><path d="M8 0h3v3H8zM4 4h3v3H4zM8 4h3v3H8zM0 8h3v3H0zM4 8h3v3H4zM8 8h3v3H8z"/></svg>
      </div>`;
  }
}

@customElement("app-root")
export class AppRoot extends LitElement {
  static styles = css`
    :host { display: block; position: relative; width: 1920px; height: 935px; overflow: hidden; background: #111217; }
    .top { height: 3px; background: #fff; border-bottom: 1px solid #8f8f8f; }
    .shell { display: grid; grid-template-columns: 71px 1fr 10px; height: 931px; }
    .scroll { background: #111217; }
    .thumb { height: 920px; background: #2e2f34; border-radius: 0 0 5px 5px; }
    .dialog { position: absolute; left: 931px; top: 54px; }
    .mark { position: absolute; box-sizing: border-box; border: 2px solid #fe0000; filter: drop-shadow(4px 4px 1px rgba(115, 115, 115, 0.6)); }
    .m1 { left: 123px; top: 227px; width: 214px; height: 49px; }
    .m2 { left: 1220px; top: 102px; width: 229px; height: 43px; }
    .m3 { left: 1172px; top: 241px; width: 96px; height: 27px; }
    .num { position: absolute; width: 30px; height: 30px; border-radius: 50%; background: #8b0000; color: #fff; font: 17px/30px "Open Sans", sans-serif; text-align: center; }
    .n1 { left: 342.500px; top: 237.500px; }
    .n2 { left: 1459.500px; top: 106.500px; }
    .n3 { left: 1286.500px; top: 236.500px; }
    .hand { position: absolute; left: 963px; top: 304px; }
  `;
  render() {
    return html`
      <div class="top"></div>
      <div class="shell"><side-nav></side-nav><dashboards-page></dashboards-page><div class="scroll"><div class="thumb"></div></div></div>
      <open-dialog class="dialog"></open-dialog>
      <div class="mark m1"></div><div class="mark m2"></div><div class="mark m3"></div>
      <div class="num n1">1</div><div class="num n2">2</div><div class="num n3">3</div>
      <svg class="hand" width="20" height="26" viewBox="0 0 20 26" fill="#fff" stroke="#1b1b2b" stroke-width="1.200" stroke-linejoin="round"><path d="M6 15V3.200c0-2.200 3-2.200 3 0V9c.3-1.800 2.900-1.600 3 .2.5-1.400 2.900-1.100 3 .8.6-1.200 2.700-.8 2.700 1v5.500c0 5-2.500 7.700-6.400 7.700-3.300 0-5-1.300-6.600-4.100L1.400 15.200c-1-1.900 1.400-2.800 2.700-1.300z"/><path d="M9 9v3.500M12 9.500v3M15 10.500V13" fill="none"/></svg>`;
  }
}
